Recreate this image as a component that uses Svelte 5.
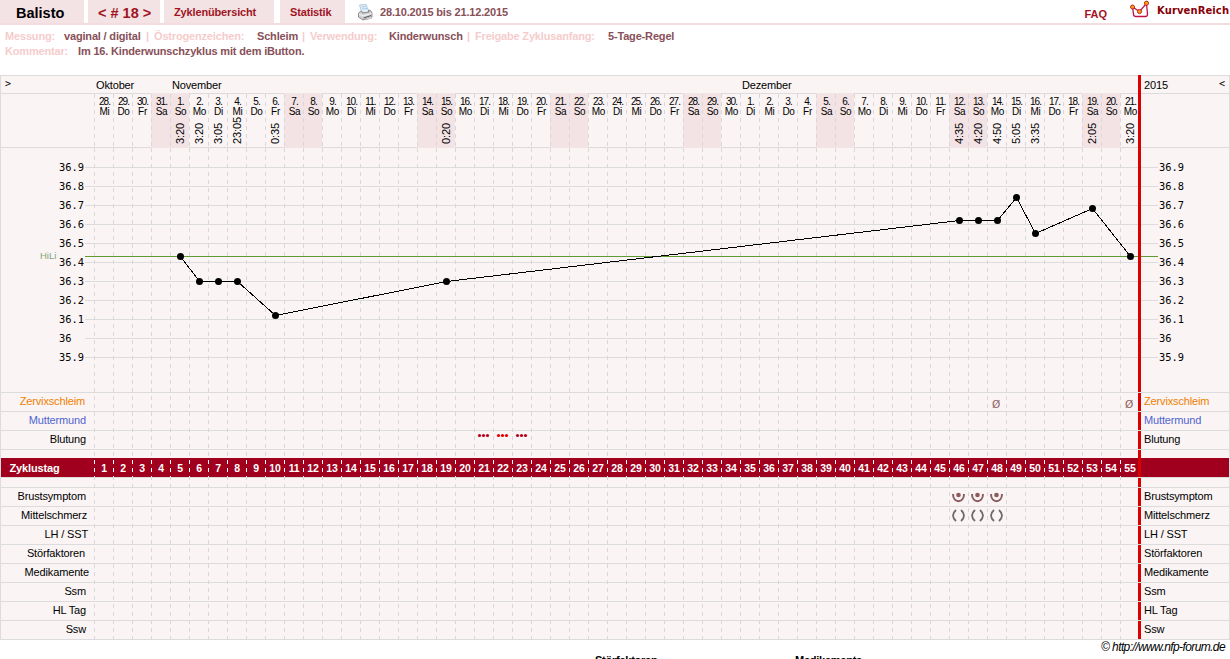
<script>
  const COL = 19;
  const LEFT = 94;

  const weekdays = ['Mi', 'Do', 'Fr', 'Sa', 'So', 'Mo', 'Di'];
  const times = {
    5: '3:20', 6: '3:20', 7: '3:05', 8: '23:05', 10: '0:35', 19: '0:20',
    46: '4:35', 47: '4:20', 48: '4:50', 49: '5:05', 50: '3:35', 53: '2:05', 55: '3:20'
  };

  const days = Array.from({ length: 55 }, (_, i) => {
    const date = new Date(2015, 9, 28 + i, 12);
    const weekday = weekdays[i % 7];
    return {
      nr: i + 1,
      date: date.getDate() + '.',
      weekday,
      weekend: weekday === 'Sa' || weekday === 'So',
      time: times[i + 1]
    };
  });

  const scale = ['36.9', '36.8', '36.7', '36.6', '36.5', '36.4', '36.3', '36.2', '36.1', '36', '35.9'];

  const temps = [
    [5, 36.43], [6, 36.3], [7, 36.3], [8, 36.3], [10, 36.12], [19, 36.3],
    [46, 36.62], [47, 36.62], [48, 36.62], [49, 36.74], [50, 36.555], [53, 36.685], [55, 36.43]
  ];

  const topRows = [
    { name: 'Zervixschleim', color: '#f08000', end: 9 },
    { name: 'Muttermund', color: '#4f64d2', end: 8 },
    { name: 'Blutung', end: 8 }
  ];

  const bottomRows = [
    { name: 'Brustsymptom', end: 8 },
    { name: 'Mittelschmerz', end: 7 },
    { name: 'LH / SST', end: 6 },
    { name: 'Störfaktoren', end: 9 },
    { name: 'Medikamente', end: 5 },
    { name: 'Ssm', end: 8 },
    { name: 'HL Tag', end: 8 },
    { name: 'Ssw', end: 8 }
  ];

  const bleeding = [[21, '#b8001c'], [22, '#e00000'], [23, '#b8001c']];

  // chart coordinates, y counted from the top edge of the chart
  const colX = (nr) => LEFT + (nr - 1) * COL;
  const tempY = (t) => Math.round(92 + (36.9 - t) * 190) + 0.5;
  const curve = temps.map(([nr, t]) => `${colX(nr) + 10.5},${tempY(t)}`).join(' ');
</script>

<div class="page">
  <header>
    <div class="tab name">Balisto</div>
    <div class="tab cycle">&lt; # 18 &gt;</div>
    <div class="tab overview">Zyklenübersicht</div>
    <div class="tab stats">Statistik</div>
    <svg class="printer" width="17" height="17" viewBox="0 0 17 17">
      <path d="M2.5 1 L9 0.5 L12 8 L5 9 Z" fill="#e4f0fb" stroke="#a9bdd2" stroke-width=".8" />
      <path d="M4.5 3 L9 2.5 M5 5 L10 4.5" stroke="#a8cbec" />
      <path d="M1.5 9 L4.5 7 L5.5 9 L12 8 L11.5 6 L13.5 6.5 L15 9 V13 L6 16 L1.5 13 Z" fill="#d2d2d2" stroke="#777" stroke-width=".8" />
      <path d="M2 10 L6 12 L14.5 9.5" fill="none" stroke="#f8f8f8" />
      <path d="M6.5 14 L14 11.5" stroke="#555" />
      <path d="M8 15 L14 12.5 L15 14 L9 16 Z" fill="#eee" stroke="#888" stroke-width=".5" />
    </svg>
    <span class="range">28.10.2015 bis 21.12.2015</span>
    <span class="faq">FAQ</span>
    <svg class="crown" width="22" height="18" viewBox="0 0 22 18">
      <path d="M0 12.5 H22 M15.5 2 V18" stroke="#ececec" stroke-width=".7" />
      <path d="M2.5 7 L9.5 11.5 L16.5 3.5 L17.5 14 Q17.5 16.5 15.5 16.5 H6 Q3.5 16.5 3.5 14 Z" fill="#fff" stroke="#c01048" stroke-width="1.3" />
      <g fill="#ff9a10" stroke="#b02020" stroke-width=".9">
        <circle cx="2.5" cy="7" r="2" />
        <circle cx="9.5" cy="11.5" r="2.1" />
        <circle cx="16.5" cy="3.2" r="2.1" />
      </g>
    </svg>
    <span class="brand">KurvenReich</span>
  </header>

  <section class="info">
    <div class="facts">
      <i>Messung:</i><b>vaginal / digital</b><i>|</i>
      <i>Östrogenzeichen:</i><b>Schleim</b><i>|</i>
      <i>Verwendung:</i><b>Kinderwunsch</b><i>|</i>
      <i>Freigabe Zyklusanfang:</i><b>5-Tage-Regel</b>
    </div>
    <div class="comment"><i>Kommentar:</i><b>Im 16. Kinderwunschzyklus mit dem iButton.</b></div>
  </section>

  <main class="chart">
    <div class="months">
      <span class="arrow">&gt;</span>
      <span>Oktober</span>
      <span>November</span>
      <span>Dezember</span>
      <span>2015</span>
      <span class="arrow">&lt;</span>
    </div>

    <div class="row dates">
      <div></div>
      {#each days as d}
        <div class="day" class:weekend={d.weekend}>
          <span class="date">{d.date}</span>
          <span class="weekday">{d.weekday}</span>
          {#if d.time}<span class="time">{d.time}</span>{/if}
        </div>
      {/each}
      <div></div>
    </div>

    <div class="temps">
      {#each scale as t}
        <div class="temp"><span>{t}</span><hr /><span>{t}</span></div>
      {/each}
      <span class="hili">HiLi</span>
    </div>

    {#each topRows as r}
      <div class="line">
        <span class="label" style="color: {r.color}; padding-right: {r.end}px">{r.name}</span>
        <span class="right" style="color: {r.color}">{r.name}</span>
      </div>
    {/each}

    <div class="line gap"></div>
    <div class="row cycledays">
      <div class="title">Zyklustag</div>
      {#each days as d}
        <div class="nr">{d.nr}</div>
      {/each}
      <div></div>
    </div>
    <div class="line gap after"></div>

    {#each bottomRows as r}
      <div class="line">
        <span class="label" style="padding-right: {r.end}px">{r.name}</span>
        <span class="right">{r.name}</span>
      </div>
    {/each}

    <svg class="overlay" width="1230" height="565" viewBox="0 0 1230 565">
      {#each days as d}
        <g fill="none" stroke-dasharray="4 4">
          <path d="M{colX(d.nr) + 0.5} 19 V72" stroke="#d8d8d8" />
          <path d="M{colX(d.nr) + 0.5} 73 V564" stroke="#d8d8d8" />
        </g>
        <path d="M{colX(d.nr) + 0.5} 385 v4 m0 4 v4 m0 4 v1" stroke="#fff" />
      {/each}

      <path d="M85 181.5 H1158" stroke="#5f9b32" />
      <polyline points={curve} fill="none" stroke="#000" shape-rendering="crispEdges" />
      {#each temps as [nr, t]}
        <circle cx={colX(nr) + 10.5} cy={tempY(t)} r="3.5" />
      {/each}

      {#each bleeding as [nr, color]}
        <g fill={color}>
          <circle cx={colX(nr) + 5.5} cy="360.5" r="1.6" />
          <circle cx={colX(nr) + 9.5} cy="360.5" r="1.6" />
          <circle cx={colX(nr) + 13.5} cy="360.5" r="1.6" />
        </g>
      {/each}

      {#each [48, 55] as nr}
        <text x={colX(nr) + 5} y="333" class="none">Ø</text>
      {/each}

      {#each [46, 47, 48] as nr}
        <g transform="translate({colX(nr) + 9.5} 0)" fill="none">
          <path d="M-5.5 419 C-5.5 428.5,5.5 428.5,5.5 419" stroke="#8a5c5e" stroke-width="2" />
          <circle cx="0" cy="420" r="2.3" fill="#8a5c5e" />
          <path d="M-2.5 435 Q-8.5 440.5 -2.5 446 M2.5 435 Q8.5 440.5 2.5 446" stroke="#6e6a6a" stroke-width="1.8" />
        </g>
      {/each}

      <path d="M1139.5 0 V317 M1139.5 318 v18 m0 1 v18 m0 1 v18 m0 1 v27 m0 1 v9 m0 1 v18 m0 1 v18 m0 1 v18 m0 1 v18 m0 1 v18 m0 1 v18 m0 1 v18 m0 1 v18" stroke="#dc0000" stroke-width="3" />
    </svg>
  </main>

  <div class="copyright">© http://www.nfp-forum.de</div>
  <footer><b>Störfaktoren</b><b>Medikamente</b></footer>
</div>

<style>
  :global(body) {
    background: #fff;
  }

  .page {
    width: 1230px;
    height: 659px;
    overflow: hidden;
    font-family: "Liberation Sans", Arial, sans-serif;
    font-size: 11px;
    color: #000;
  }

  i {
    font-style: normal;
  }

  header {
    display: flex;
    box-sizing: border-box;
    height: 25px;
    border-bottom: 2px solid #f3dcde;
    font-weight: bold;
    color: #a01424;
    white-space: nowrap;
  }

  .tab {
    box-sizing: border-box;
    height: 23px;
    line-height: 25px;
    letter-spacing: -0.15px;
    background: #f3e3e5;
  }

  .name {
    width: 84px;
    padding-left: 16px;
    margin-right: 4px;
    font-size: 14.5px;
    line-height: 26px;
    letter-spacing: 0;
    color: #000;
  }

  .cycle {
    width: 72px;
    padding-left: 10px;
    margin-right: 4px;
    font-size: 14.5px;
    line-height: 26px;
    letter-spacing: 0;
  }

  .overview {
    width: 110px;
    padding-left: 10px;
    margin-right: 6px;
  }

  .stats {
    width: 65px;
    padding-left: 10px;
  }

  .printer {
    margin: 4px 0 0 12px;
  }

  .range {
    margin-left: 6px;
    line-height: 25px;
    letter-spacing: -0.17px;
    color: #885058;
  }

  .faq {
    margin-left: auto;
    line-height: 28px;
  }

  .crown {
    margin: 0 5px 0 23px;
  }

  .brand {
    width: 73px;
    font-family: "DejaVu Sans", sans-serif;
    font-size: 10px;
    line-height: 21px;
    letter-spacing: 0.1px;
    color: #880008;
  }

  .info {
    height: 50px;
    padding: 4px 0 0 5px;
    box-sizing: border-box;
    line-height: 15px;
    font-weight: bold;
    letter-spacing: -0.17px;
    color: #885058;
    white-space: nowrap;
  }

  .info i {
    color: #f5cccc;
  }

  .facts {
    display: grid;
    grid-template-columns: 59px 82px 8px 103px 45px 8px 79px 78px 8px 133px auto;
  }

  .comment {
    display: grid;
    grid-template-columns: 73px auto;
  }

  .chart {
    position: relative;
    box-sizing: border-box;
    height: 565px;
    background: #faf4f4;
    border: 1px solid #dcdcdc;
  }

  .months {
    display: grid;
    grid-template-columns: 95px 76px 570px 402px 75px auto;
    height: 17px;
    line-height: 19px;
    letter-spacing: -0.15px;
    border-bottom: 1px solid #dcdcdc;
  }

  .arrow {
    padding-left: 4px;
    font: 10px/16px "DejaVu Sans Mono", monospace;
  }

  .months .arrow:last-child {
    padding-left: 0;
  }

  .row {
    display: grid;
    grid-template-columns: 93px repeat(55, 19px) 90px;
  }

  .dates {
    height: 53px;
    border-bottom: 1px solid #dcdcdc;
  }

  .day {
    display: flex;
    flex-direction: column;
    align-items: center;
    padding: 3px 0 0 2px;
    font-size: 10px;
    line-height: 10px;
    white-space: nowrap;
  }

  .weekend {
    margin: -1px 0;
    padding-top: 4px;
    padding-bottom: 1px;
    background: #f3e3e5;
  }

  .date {
    letter-spacing: -0.9px;
  }

  .weekday {
    letter-spacing: -0.3px;
  }

  .time {
    display: flex;
    height: 27px;
    margin: auto 1px 3px 0;
    font-size: 11px;
    line-height: 12px;
    letter-spacing: -0.1px;
    writing-mode: vertical-rl;
    transform: rotate(180deg);
  }

  .temps {
    position: relative;
    box-sizing: border-box;
    height: 245px;
    padding-top: 10px;
    border-bottom: 1px solid #dcdcdc;
  }

  .temp {
    display: grid;
    grid-template-columns: 26px 1073px 26px;
    align-items: center;
    height: 19px;
    padding-left: 58px;
    font: 10.4px/19px "DejaVu Sans Mono", monospace;
  }

  .temp span:last-child {
    padding-left: 1px;
  }

  .temp hr {
    width: 1073px;
    height: 1px;
    margin: 0;
    border: 0;
    background: #dcdcdc;
  }

  .hili {
    position: absolute;
    left: 39px;
    top: 103px;
    font-size: 9.5px;
    line-height: 10px;
    color: #7fa878;
  }

  .line {
    display: grid;
    grid-template-columns: 93px 1fr 85px;
    box-sizing: border-box;
    height: 19px;
    line-height: 17px;
    letter-spacing: -0.15px;
    border-bottom: 1px solid #dcdcdc;
    white-space: nowrap;
  }

  .label {
    text-align: right;
  }

  .right {
    grid-column: 3;
  }

  .gap {
    height: 8px;
    border-bottom: 0;
  }

  .after {
    height: 11px;
    border-top: 1px solid #dcdcdc;
    border-bottom: 1px solid #dcdcdc;
  }

  .cycledays {
    height: 19px;
    line-height: 20px;
    background: #a0001e;
    color: #fff;
    font-weight: bold;
  }

  .title {
    padding-left: 8.5px;
    letter-spacing: -0.15px;
  }

  .nr {
    padding-left: 1px;
    font-size: 10.5px;
    line-height: 21px;
    letter-spacing: -0.2px;
    text-align: center;
  }

  .overlay {
    position: absolute;
    left: -1px;
    top: -1px;
  }

  .none {
    font: 10.5px "DejaVu Sans", sans-serif;
    fill: #8a5c5e;
  }

  .copyright {
    padding-right: 5px;
    text-align: right;
    font-size: 12px;
    font-style: italic;
    line-height: 15px;
    letter-spacing: -0.6px;
  }

  footer {
    display: grid;
    grid-template-columns: 200px auto;
    padding-left: 595px;
    line-height: 11px;
    letter-spacing: -0.25px;
  }
</style>
